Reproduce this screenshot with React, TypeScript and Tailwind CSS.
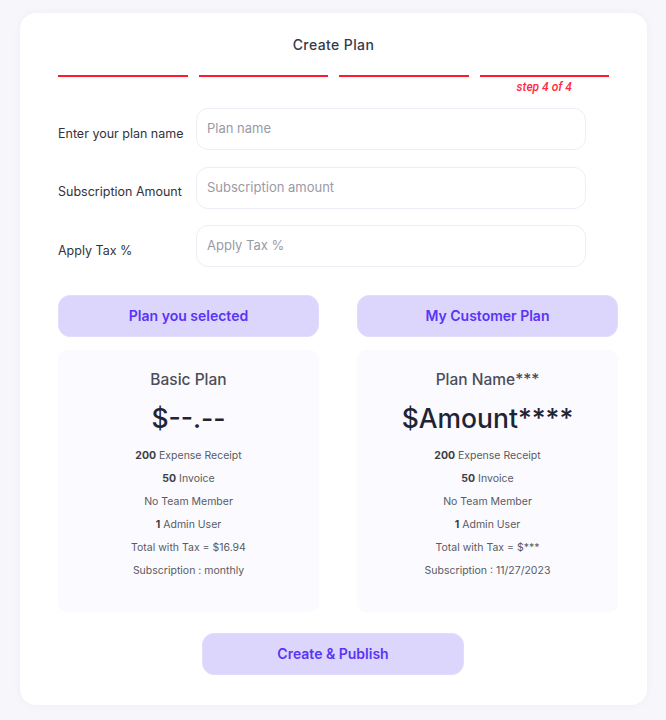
import React from "react";

const features = (total: string, sub: string) => [
  { b: "200", t: " Expense Receipt" },
  { b: "50", t: " Invoice" },
  { b: "", t: "No Team Member" },
  { b: "1", t: " Admin User" },
  { b: "", t: `Total with Tax = ${total}` },
  { b: "", t: `Subscription : ${sub}` },
];

function PlanCol({ btn, name, price, total, sub }: { btn: string; name: string; price: string; total: string; sub: string }) {
  return (
    <div className="flex w-[261px] flex-col">
      <div className="flex h-[42px] items-center justify-center rounded-[12px] border border-[#e2dcfe] bg-[#dcd6fd] pb-[2px] text-[14px] font-semibold text-[#5a34f6]">
        {btn}
      </div>
      <div className="mt-[13px] flex h-[262px] flex-col items-center rounded-[9px] bg-[#fafaff] pt-[20px]">
        <div className="text-[15.5px] font-medium leading-[20px] text-[#4d4d57]">{name}</div>
        <div className="mt-[10px] text-[26.5px] font-medium leading-[36px] text-[#1f2435]">{price}</div>
        <div className="mt-[8px] flex flex-col items-center">
          {features(total, sub).map((f, i) => (
            <div key={i} className="text-[10.5px] leading-[23px] text-[#5a5a62]">
              {f.b && <span className="font-bold text-[#3f3f46]">{f.b}</span>}
              {f.t}
            </div>
          ))}
        </div>
      </div>
    </div>
  );
}

export default function App() {
  const inputs = [
    { label: "Enter your plan name", ph: "Plan name" },
    { label: "Subscription Amount", ph: "Subscription amount" },
    { label: "Apply Tax %", ph: "Apply Tax %" },
  ];
  return (
    <div className="min-h-screen bg-[#f6f6fb] pl-[20px] pr-[19px] pt-[13px] pb-[15px]" style={{ fontFamily: "Inter, 'Noto Sans', sans-serif" }}>
      <div className="flex h-[692px] w-[627px] flex-col rounded-[16px] bg-white pl-[38px] pt-[22px] shadow-[0_0_10px_rgba(60,60,120,0.04)]">
        <div className="w-[551px] text-center text-[14px] font-medium leading-[20px] tracking-[0.4px] text-[#343a48]">Create Plan</div>

        <div className="mt-[20px] flex w-[551px] gap-[11px]">
          {[0, 1, 2, 3].map((i) => (
            <div key={i} className="flex flex-1 flex-col items-center">
              <div className="h-[2px] w-full bg-[#ff1a2e]" />
              {i === 3 && (
                <div className="mt-[3px] text-[12px] font-medium italic leading-[14px] text-[#ff2a44]" style={{ fontFamily: "Roboto, sans-serif" }}>
                  step 4 of 4
                </div>
              )}
            </div>
          ))}
        </div>

        <div className="mt-[14px] flex flex-col gap-[16.5px]">
          {inputs.map((r) => (
            <div key={r.label} className="flex items-center">
              <div className="mt-[10px] w-[138px] text-[12.5px] text-[#33333b]">{r.label}</div>
              <input
                placeholder={r.ph}
                className="h-[42px] w-[390px] rounded-[12px] border border-[#eceef6] bg-white px-[10px] pb-[2px] text-[13px] text-[#333] outline-none placeholder:text-[#9a9aa6]"
              />
            </div>
          ))}
        </div>

        <div className="mt-[28px] flex gap-[38px]">
          <PlanCol btn="Plan you selected" name="Basic Plan" price="$--.--" total="$16.94" sub="monthly" />
          <PlanCol btn="My Customer Plan" name="Plan Name***" price="$Amount****" total="$***" sub="11/27/2023" />
        </div>

        <div className="ml-[144px] mt-[21px] flex h-[42px] w-[262px] items-center justify-center rounded-[12px] border border-[#e2dcfe] bg-[#dcd6fd] pb-[2px] text-[14px] font-semibold text-[#5a34f6]">
          Create &amp; Publish
        </div>
      </div>
    </div>
  );
}
